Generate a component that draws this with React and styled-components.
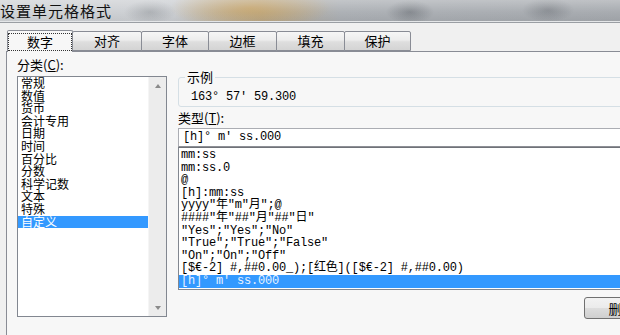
import React from "react";
import styled, { createGlobalStyle } from "styled-components";

const GlobalStyle = createGlobalStyle`
  html, body {
    margin: 0;
    padding: 0;
    background: #f0f0f0;
    overflow: hidden;
  }
`;

const SANS = `"Noto Sans CJK SC", "Noto Sans", sans-serif`;
const MONO = `"Liberation Mono", "Noto Sans CJK SC", monospace`;

const Window = styled.div`
  width: 620px;
  height: 335px;
  overflow: hidden;
  display: flex;
  flex-direction: column;
  font-family: ${SANS};
  color: #000;
  background: #f0f0f0;
`;

const TitleBar = styled.div`
  flex: none;
  height: 22px;
  display: flex;
  align-items: center;
  border-bottom: 1px solid #9a9ea3;
  box-shadow: inset 0 -1px 0 #e4e6e8;
  background:
    linear-gradient(to bottom, rgba(255, 255, 255, 0.3) 0%, rgba(255, 255, 255, 0.05) 55%, rgba(0, 0, 0, 0.04) 100%),
    radial-gradient(ellipse 26px 12px at 150px 12px, rgba(110, 115, 120, 0.35), rgba(110, 115, 120, 0)),
    radial-gradient(ellipse 80px 22px at 250px 8px, rgba(196, 160, 98, 0.85), rgba(196, 160, 98, 0)),
    radial-gradient(ellipse 24px 12px at 410px 12px, rgba(80, 85, 92, 0.45), rgba(80, 85, 92, 0)),
    radial-gradient(ellipse 26px 12px at 548px 10px, rgba(80, 85, 92, 0.4), rgba(80, 85, 92, 0)),
    linear-gradient(to right, #cfd2d5 0%, #c9ccd0 28%, #b6aa94 42%, #a9adb2 55%, #a3a7ac 100%);
`;

const TitleText = styled.span`
  font-size: 15px;
  letter-spacing: 1px;
  line-height: 18px;
  color: #111;
`;

const Body = styled.div`
  flex: 1;
  width: 690px;
  padding: 6px 0 0 6px;
  display: flex;
  flex-direction: column;
`;

const TabRow = styled.div`
  display: flex;
  align-items: flex-end;
  height: 22px;
  padding-left: 1px;
  position: relative;
  z-index: 1;
`;

const Tab = styled.div`
  width: ${(p) => p.$w}px;
  height: ${(p) => (p.$active ? 22 : 20)}px;
  margin-left: ${(p) => (p.$first ? 0 : -1)}px;
  margin-bottom: ${(p) => (p.$active ? -1 : 0)}px;
  box-sizing: border-box;
  border: 1px solid #898c95;
  border-bottom: ${(p) => (p.$active ? "none" : "1px solid #898c95")};
  border-radius: 2px 2px 0 0;
  background: ${(p) =>
    p.$active
      ? "#f7f7f7"
      : "linear-gradient(to bottom, #f6f6f6 0%, #ececec 45%, #dedede 55%, #d4d4d4 100%)"};
  display: flex;
  align-items: center;
  justify-content: center;
  font-size: 13px;
  line-height: 16px;
  position: relative;
  z-index: ${(p) => (p.$active ? 2 : 1)};
`;

const Focus = styled.span`
  display: flex;
  align-items: center;
  justify-content: center;
  width: 62px;
  height: 16px;
  outline: 1px dotted #333;
`;

const Panel = styled.div`
  flex: 1;
  border-top: 1px solid #898c95;
  border-left: 1px solid #898c95;
  background: #f7f7f7;
  display: grid;
  grid-template-columns: 150px 481px;
  column-gap: 11px;
  align-items: start;
  padding: 5px 0 0 10px;
`;

const Column = styled.div`
  display: flex;
  flex-direction: column;
  padding-top: ${(p) => p.$top || 0}px;
`;

const Label = styled.div`
  font-size: 13px;
  line-height: 16px;
  margin: ${(p) => p.$margin || "0"};
  u {
    text-decoration: underline;
    text-underline-offset: 1px;
  }
`;

const CategoryBox = styled.div`
  height: 241px;
  box-sizing: border-box;
  border: 1px solid #828790;
  background: #fff;
  display: flex;
`;

const CategoryList = styled.div`
  flex: 1;
  display: flex;
  flex-direction: column;
`;

const CategoryItem = styled.div`
  height: 12.6px;
  line-height: 12.6px;
  font-size: 12px;
  padding-left: 3px;
  white-space: nowrap;
  background: ${(p) => (p.$selected ? "#3399ff" : "transparent")};
  color: ${(p) => (p.$selected ? "#fff" : "#000")};
`;

const ScrollBar = styled.div`
  width: 17px;
  flex: none;
  background: #ececec;
  border-left: 1px solid #f5f5f5;
  display: flex;
  flex-direction: column;
  justify-content: space-between;
  align-items: center;
  padding: 7px 0 6px;
`;

const Arrow = styled.div`
  width: 0;
  height: 0;
  border-left: 3.5px solid transparent;
  border-right: 3.5px solid transparent;
  border-bottom: ${(p) => (p.$down ? "none" : "4px solid #8a8a8a")};
  border-top: ${(p) => (p.$down ? "4px solid #8a8a8a" : "none")};
`;

const SampleGroup = styled.fieldset`
  margin: 0;
  min-width: 0;
  border: 1px solid #d5dfe5;
  border-radius: 3px;
  padding: 0 0 2px 6px;
  legend {
    padding: 0 2px;
    font-size: 13px;
    line-height: 16px;
  }
`;

const SampleValue = styled.div`
  margin-top: 5px;
  padding-left: 6px;
  font-family: ${MONO};
  font-size: 12px;
  letter-spacing: -0.2px;
  line-height: 14px;
`;

const TypeInput = styled.div`
  height: 19px;
  box-sizing: border-box;
  border: 1px solid #abadb3;
  border-bottom-color: #8e9096;
  background: #fff;
  padding-left: 4px;
  font-family: ${MONO};
  font-size: 12px;
  letter-spacing: -0.2px;
  line-height: 17px;
`;

const TypeList = styled.div`
  height: 143px;
  box-sizing: border-box;
  border: 1px solid #828790;
  border-top-color: #6f7278;
  background: #fff;
  padding-top: 1px;
  display: flex;
  flex-direction: column;
`;

const TypeItem = styled.div`
  height: 12.6px;
  line-height: 12.6px;
  font-family: ${MONO};
  font-size: 12px;
  letter-spacing: -0.2px;
  padding-left: 2px;
  white-space: pre;
  background: ${(p) => (p.$selected ? "#3399ff" : "transparent")};
  color: ${(p) => (p.$selected ? "#e8f2ff" : "#000")};
`;

const ButtonRow = styled.div`
  display: flex;
  justify-content: flex-end;
  margin-top: 7px;
`;

const Button = styled.div`
  width: 75px;
  height: 22px;
  box-sizing: border-box;
  border: 1px solid #707070;
  border-radius: 3px;
  background: linear-gradient(to bottom, #f2f2f2 0%, #ebebeb 48%, #dddddd 52%, #cfcfcf 100%);
  display: flex;
  align-items: center;
  justify-content: center;
  font-size: 13px;
`;

const tabs = [
  { label: "数字", w: 66 },
  { label: "对齐", w: 70 },
  { label: "字体", w: 68 },
  { label: "边框", w: 69 },
  { label: "填充", w: 69 },
  { label: "保护", w: 67 },
];

const categories = [
  "常规",
  "数值",
  "货币",
  "会计专用",
  "日期",
  "时间",
  "百分比",
  "分数",
  "科学记数",
  "文本",
  "特殊",
  "自定义",
];

const formats = [
  "mm:ss",
  "mm:ss.0",
  "@",
  "[h]:mm:ss",
  "yyyy\"年\"m\"月\";@",
  "####\"年\"##\"月\"##\"日\"",
  "\"Yes\";\"Yes\";\"No\"",
  "\"True\";\"True\";\"False\"",
  "\"On\";\"On\";\"Off\"",
  "[$€-2] #,##0.00_);[红色]([$€-2] #,##0.00)",
  "[h]° m′ ss.000",
];

export default function App() {
  return (
    <>
      <GlobalStyle />
      <Window>
        <TitleBar>
          <TitleText>设置单元格格式</TitleText>
        </TitleBar>
        <Body>
          <TabRow>
            {tabs.map((t, i) => (
              <Tab key={t.label} $w={t.w} $first={i === 0} $active={i === 0}>
                {i === 0 ? <Focus>{t.label}</Focus> : t.label}
              </Tab>
            ))}
          </TabRow>
          <Panel>
            <Column>
              <Label $margin="0 0 3px 0">
                分类(<u>C</u>):
              </Label>
              <CategoryBox>
                <CategoryList>
                  {categories.map((c) => (
                    <CategoryItem key={c} $selected={c === "自定义"}>
                      {c}
                    </CategoryItem>
                  ))}
                </CategoryList>
                <ScrollBar>
                  <Arrow />
                  <Arrow $down />
                </ScrollBar>
              </CategoryBox>
            </Column>
            <Column $top={12}>
              <SampleGroup>
                <legend>示例</legend>
                <SampleValue>163° 57′ 59.300</SampleValue>
              </SampleGroup>
              <Label $margin="3px 0 2px 0">
                类型(<u>T</u>):
              </Label>
              <TypeInput>[h]° m′ ss.000</TypeInput>
              <TypeList>
                {formats.map((f, i) => (
                  <TypeItem key={f} $selected={i === formats.length - 1}>
                    {f}
                  </TypeItem>
                ))}
              </TypeList>
              <ButtonRow>
                <Button>删除</Button>
              </ButtonRow>
            </Column>
          </Panel>
        </Body>
      </Window>
    </>
  );
}
